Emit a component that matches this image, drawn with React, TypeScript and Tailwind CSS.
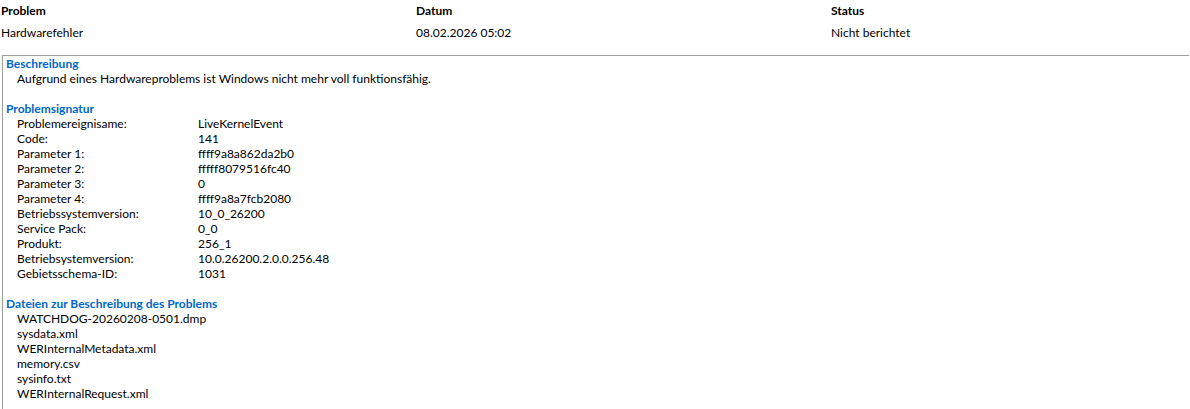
import React from "react";

const sig: [string, string][] = [
  ["Problemereignisame:", "LiveKernelEvent"],
  ["Code:", "141"],
  ["Parameter 1:", "ffff9a8a862da2b0"],
  ["Parameter 2:", "fffff8079516fc40"],
  ["Parameter 3:", "0"],
  ["Parameter 4:", "ffff9a8a7fcb2080"],
  ["Betriebssystemversion:", "10_0_26200"],
  ["Service Pack:", "0_0"],
  ["Produkt:", "256_1"],
  ["Betriebsystemversion:", "10.0.26200.2.0.0.256.48"],
  ["Gebietsschema-ID:", "1031"],
];

const files = [
  "WATCHDOG-20260208-0501.dmp",
  "sysdata.xml",
  "WERInternalMetadata.xml",
  "memory.csv",
  "sysinfo.txt",
  "WERInternalRequest.xml",
];

export default function App() {
  return (
    <div className="w-[1190px] h-[409px] bg-white overflow-hidden text-[12px] leading-[15px] text-black font-['Lato','Noto_Sans',sans-serif]">
      <div className="pt-[3px] pl-[1px] grid grid-cols-[415px_415px_1fr]">
        <div className="font-bold">Problem</div>
        <div className="font-bold">Datum</div>
        <div className="font-bold">Status</div>
        <div className="mt-[7px]">Hardwarefehler</div>
        <div className="mt-[7px]">08.02.2026 05:02</div>
        <div className="mt-[7px]">Nicht berichtet</div>
      </div>
      <div className="mt-[15px] ml-[2px] w-[1187px] h-[400px] border-t border-l border-[#a0a0a0] pl-[3px]">
        <div className="font-bold text-[#0066cc]">Beschreibung</div>
        <div className="pl-[11px]">Aufgrund eines Hardwareproblems ist Windows nicht mehr voll funktionsfähig.</div>
        <div className="h-[15px]" />
        <div className="font-bold text-[#0066cc]">Problemsignatur</div>
        <div className="pl-[11px] grid grid-cols-[181px_1fr]">
          {sig.map(([k, v]) => (
            <React.Fragment key={k}>
              <div>{k}</div>
              <div>{v}</div>
            </React.Fragment>
          ))}
        </div>
        <div className="h-[15px]" />
        <div className="font-bold text-[#0066cc]">Dateien zur Beschreibung des Problems</div>
        <div className="pl-[11px]">
          {files.map((f) => (
            <div key={f}>{f}</div>
          ))}
        </div>
      </div>
    </div>
  );
}
